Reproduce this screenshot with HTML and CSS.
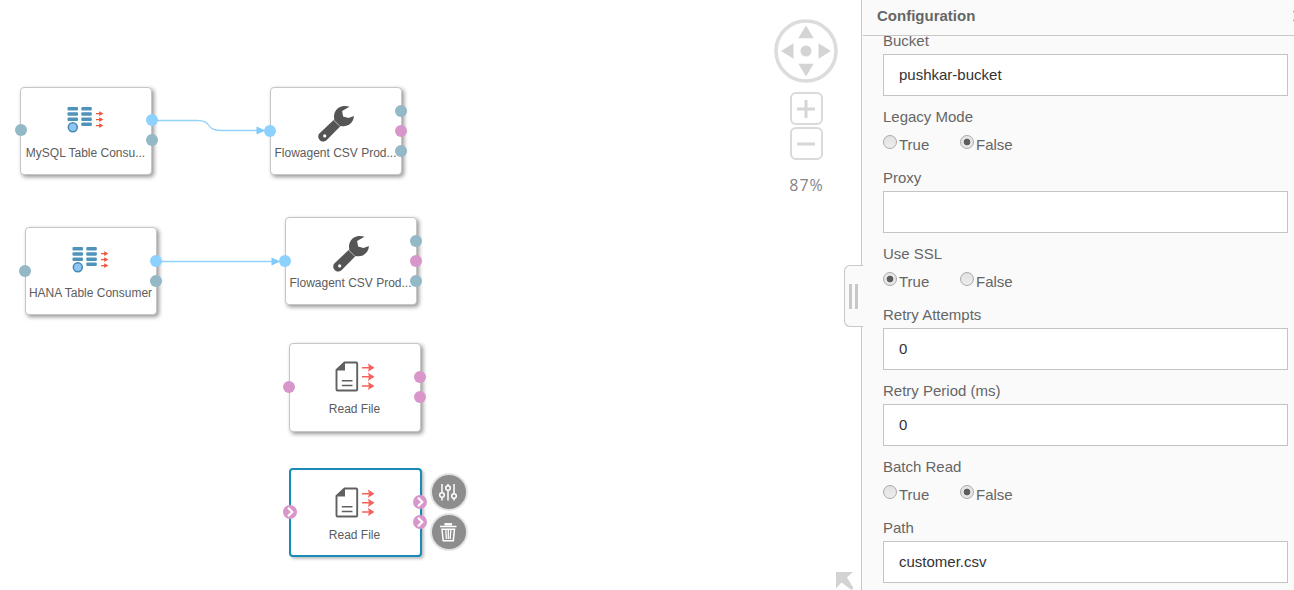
FILE: index.html
```html
<!DOCTYPE html>
<html lang="en">
<head>
<meta charset="utf-8">
<title>Pipeline</title>
<link rel="stylesheet" href="styles.css">
</head>
<body>
<svg class="defs" width="0" height="0">
  <defs>
    <symbol id="table" viewBox="0 0 44 40">
      <g fill="#4f93ba"><rect x="3.5" y="5" width="10.5" height="3.500" rx="1"/><rect x="3.5" y="10.200" width="10.500" height="3.500" rx="1"/><rect x="3.500" y="15.400" width="10.500" height="3.500" rx="1"/><rect x="17.300" y="5" width="10.500" height="3.500" rx="1"/><rect x="17.300" y="10.200" width="10.500" height="3.500" rx="1"/><rect x="17.300" y="15.400" width="10.500" height="3.500" rx="1"/><rect x="17.300" y="20.500" width="10.500" height="3.500" rx="1"/></g>
      <circle cx="8.800" cy="25.200" r="4.500" fill="#8fc5f3" stroke="#4689b4" stroke-width="1.500"/>
      <path d="M32 11.600h5M32 17.600h5M32 23.600h5" stroke="#f0563d" stroke-width="1.200"/>
      <path fill="#f0563d" d="M35.200 9.200l4.200 2.400-4.200 2.400zM35.200 15.200l4.200 2.400-4.200 2.400zM35.200 21.200l4.200 2.400-4.200 2.400z"/>
    </symbol>
    <symbol id="wrench" viewBox="0 0 44 40">
      <path fill="#555" d="M35.500 4.800C29.500 2.600 22.600 5 20.600 11c-.8 2.300-.8 4.200-.2 6.200L5.600 31.300c-4.200 4.300 2.300 11.200 6.900 7L26.600 23.900c5.200 1.100 9.900-.6 12.200-5.300 .7-1.400 1-2.900 1.100-4.600l-5.300 2.100-5.500-1.700-1-5.300z"/>
      <path d="M19.400 17.800l6.300 6.300" stroke="#fff" stroke-width=".6"/>
      <circle cx="10.700" cy="33.900" r="1.600" fill="#fff"/>
    </symbol>
    <symbol id="file" viewBox="0 0 44 40">
      <path d="M3.500 12L11.500 4.500H23.200a1 1 0 0 1 1 1V31.500a1 1 0 0 1-1 1H4.500a1 1 0 0 1-1-1z" fill="#fff" stroke="#606060" stroke-width="1.900"/>
      <path d="M3 12.500L12 4v8.500z" fill="#606060"/>
      <path d="M8.800 22.800h10.700M8.800 27.500h10.700" stroke="#606060" stroke-width="1.600"/>
      <path d="M29 9.700h9M29 18.800h9M29 28h9" stroke="#f75f5c" stroke-width="1.500"/>
      <path fill="#f75f5c" d="M35 5.600l6.500 4.100-6.500 4.100 1-4.100zM35 14.700l6.500 4.100-6.500 4.100 1-4.100zM35 23.900l6.500 4.100-6.500 4.100 1-4.100z"/>
    </symbol>
    <symbol id="chevron" viewBox="0 0 14 14">
      <path d="M5 2.700l4.300 4.300L5 11.300" fill="none" stroke="#fff" stroke-width="2.100"/>
    </symbol>
  </defs>
</svg>
<div class="app">
  <main class="canvas">
    <svg class="links" width="861" height="590">
      <path d="M152 120.500H197C214 120.500 204 130.500 221 130.500H258M156 261.500H273" fill="none" stroke="#93d3f8" stroke-width="1.300"/>
      <path d="M256.500 126.500l9 4-9 4zM271.500 257.500l9 4-9 4z" fill="#80cbf7"/>
    </svg>

    <div class="node n1">
      <svg class="icon"><use href="#table"/></svg><span class="label">MySQL Table Consu...</span>
      <i class="port in"></i><i class="port out upper sky"></i><i class="port out lower"></i>
    </div>
    <div class="node n2">
      <svg class="icon"><use href="#wrench"/></svg><span class="label">Flowagent CSV Prod...</span>
      <i class="port in sky"></i><i class="port out first"></i><i class="port out mid pink"></i><i class="port out last"></i>
    </div>
    <div class="node n3">
      <svg class="icon"><use href="#table"/></svg><span class="label">HANA Table Consumer</span>
      <i class="port in"></i><i class="port out upper sky"></i><i class="port out lower"></i>
    </div>
    <div class="node n4">
      <svg class="icon"><use href="#wrench"/></svg><span class="label">Flowagent CSV Prod...</span>
      <i class="port in sky"></i><i class="port out first"></i><i class="port out mid pink"></i><i class="port out last"></i>
    </div>
    <div class="node n5">
      <svg class="icon"><use href="#file"/></svg><span class="label">Read File</span>
      <i class="port in pink"></i><i class="port out upper pink"></i><i class="port out lower pink"></i>
    </div>
    <div class="node n6 selected">
      <svg class="icon"><use href="#file"/></svg><span class="label">Read File</span>
      <i class="port in pink"><svg width="14" height="14"><use href="#chevron"/></svg></i>
      <i class="port out upper pink"><svg width="14" height="14"><use href="#chevron"/></svg></i>
      <i class="port out lower pink"><svg width="14" height="14"><use href="#chevron"/></svg></i>
    </div>

    <div class="actions">
      <button class="action" aria-label="Configure"><svg width="34" height="34" viewBox="0 0 34 34" fill="none" stroke="#fff" stroke-width="1.500"><path d="M10 9v8.500M10 22.500v3M16 9v1.500M16 15.500v10M22 9v9.500M22 23.500v2"/><circle cx="10" cy="20" r="2.300"/><circle cx="16" cy="13" r="2.300"/><circle cx="22" cy="21" r="2.300"/></svg></button>
      <button class="action" aria-label="Delete"><svg width="34" height="34" viewBox="0 0 34 34" fill="none" stroke="#fff" stroke-width="1.500"><path d="M8 11.500h16.500M10 14.200h12.500L21.300 25.700H11.200z"/><path d="M12.500 9.300h7.500" stroke-width="2.500"/><path d="M13.800 15l.6 9M16.300 15v9M18.800 15l-.6 9" stroke-width="1.300"/></svg></button>
    </div>

    <div class="nav">
      <svg width="64" height="64" viewBox="0 0 64 64">
        <circle cx="32" cy="32" r="30" fill="#fff" stroke="#dcdcdc" stroke-width="3.600"/>
        <circle cx="32" cy="32" r="5.500" fill="#d4d4d4"/>
        <path fill="#d4d4d4" d="M32 6.500l7.700 12.800H24.300zM32 57.500l7.700-12.800H24.300zM7 32l12.500-7.700v15.400zM57 32l-12.500-7.700v15.400z"/>
      </svg>
      <button class="zoom" aria-label="Zoom in"><svg width="18" height="18" stroke="#d6d6d6" stroke-width="3"><path d="M0 9h18M9 0v18"/></svg></button>
      <button class="zoom" aria-label="Zoom out"><svg width="18" height="18" stroke="#d6d6d6" stroke-width="3"><path d="M0 9h18"/></svg></button>
      <span class="percent">87%</span>
    </div>
    <svg class="corner" width="18" height="18"><path fill="#d3d3d3" d="M0 0h17l-6 5.500 6.500 10.500-2 2L5.500 10.500 0 16.500z"/></svg>
    <div class="grip"><i></i><i></i></div>
  </main>

  <aside class="panel">
    <header class="head"><h1>Configuration</h1><svg class="close" width="12" height="12" stroke="#d2a77d" stroke-width="1.500"><path d="M0 1l10 10M0 11L10 1"/></svg></header>
    <form class="fields">
      <div class="field"><label>Bucket</label><input type="text" value="pushkar-bucket"></div>
      <div class="field"><label>Legacy Mode</label><div class="options"><span><i class="radio"></i><b>True</b></span><span><i class="radio on"></i><b>False</b></span></div></div>
      <div class="field"><label>Proxy</label><input type="text" value=""></div>
      <div class="field"><label>Use SSL</label><div class="options"><span><i class="radio on"></i><b>True</b></span><span><i class="radio"></i><b>False</b></span></div></div>
      <div class="field"><label>Retry Attempts</label><input type="text" value="0"></div>
      <div class="field"><label>Retry Period (ms)</label><input type="text" value="0"></div>
      <div class="field"><label>Batch Read</label><div class="options"><span><i class="radio"></i><b>True</b></span><span><i class="radio on"></i><b>False</b></span></div></div>
      <div class="field"><label>Path</label><input type="text" value="customer.csv"></div>
    </form>
  </aside>
</div>
</body>
</html>
```

FILE: styles.css
```css
* { box-sizing: border-box; }
body { margin: 0; background: #fff; font-family: "Liberation Sans", Arial, sans-serif; color: #666; overflow: hidden; }
button { padding: 0; background: none; border: 0; }
.defs { position: absolute; }
.app { display: flex; height: 590px; overflow: hidden; }

.canvas { position: relative; width: 861px; flex: none; }
.links { position: absolute; left: 0; top: 0; }
.node {
  position: absolute; width: 132px; height: 88px; padding-top: 14px;
  display: flex; flex-direction: column; align-items: center; gap: 3px;
  background: #fff; border: 1px solid #c6c6c6; border-radius: 4px;
  box-shadow: 2px 2px 4px rgba(0, 0, 0, .42);
}
.n1 { left: 20px; top: 87px; }
.n2 { left: 270px; top: 87px; }
.n3 { left: 25px; top: 227px; }
.n4 { left: 285px; top: 217px; }
.n5 { left: 289px; top: 343px; height: 89px; }
.icon { width: 44px; height: 40px; flex: none; margin-left: -1px; }
.label { font-size: 12px; line-height: 16px; color: #5c5c5c; white-space: nowrap; margin-left: -1px; }

.port { position: absolute; width: 12px; height: 12px; border-radius: 50%; background: #93b8c6; }
.in { left: -7px; top: 37px; }
.out { right: -6px; }
.n1 .port { margin-top: -1px; }
.n1 .out { right: -7px; }
.n1 .in { left: -6px; }
.n2 .port { margin-top: -.5px; }
.upper { top: 27px; }
.lower { top: 47px; }
.first { top: 17px; }
.mid { top: 37px; }
.last { top: 57px; }
.sky { background: #8cd1ff; }
.pink { background: #d896cb; }

.selected { left: 288.500px; top: 468px; width: 133px; height: 89px; border: 2px solid #188ab5; box-shadow: 2px 2px 3px rgba(0, 0, 0, .25); }
.selected .port { width: 14px; height: 14px; margin: -2px -1px; }
.selected .port svg { display: block; }

.actions { position: absolute; left: 429.500px; top: 472.500px; display: flex; flex-direction: column; gap: 2px; }
.action { width: 38px; height: 38px; border-radius: 50%; background: #8d8d8d; border: 2px solid #e4e4e4; }
.action svg { display: block; }

.nav { position: absolute; left: 774px; top: 19px; width: 64px; display: flex; flex-direction: column; align-items: center; }
.zoom { width: 33px; height: 33px; display: grid; place-items: center; border: 2px solid #dadada; border-radius: 6px; }
.zoom:nth-of-type(1) { margin-top: 9px; }
.zoom + .zoom { margin-top: 2px; }
.percent { margin-top: 14px; font: 16px/22px "Open Sans", sans-serif; letter-spacing: 1px; padding-left: 1px; color: #858585; }
.corner { position: absolute; left: 836px; top: 572px; }
.grip {
  position: absolute; left: 844px; top: 265px; width: 19px; height: 62px; z-index: 1;
  display: flex; justify-content: center; align-items: center; gap: 3px; padding-right: 1px;
  background: #fafafa; border: 1px solid #c8c8c8; border-right: 0; border-radius: 6px 0 0 6px;
}
.grip i { width: 3px; height: 25px; background: #c8c8c8; }

.panel { width: 433px; height: 590px; background: #fafafa; border-left: 1px solid #c8c8c8; overflow: hidden; }
.head { position: relative; z-index: 1; display: flex; justify-content: space-between; height: 36px; padding: 7px 0 0 14px; margin-left: 1px; background: #fafafa; border-bottom: 1px solid #c8c8c8; }
.head h1 { margin: 0; font-size: 15px; line-height: 17px; }
.close { flex: none; margin: 3px -11px 0 0; }
.fields { display: flex; flex-direction: column; gap: 12px; width: 405px; margin: -4px 0 0 21px; }
.field { display: flex; flex-direction: column; font-size: 15px; }
.field label { line-height: 18px; }
.field input { margin: 4px 0 0; height: 42px; width: 405px; padding: 0 15px 2px; border: 1px solid #c4c4c4; background: #fff; font: inherit; color: #333; }
.options { display: flex; height: 31px; padding-top: 9px; }
.options span { display: flex; width: 77px; gap: 2px; }
.options b { font-weight: normal; line-height: 20px; }
.radio { width: 14px; height: 14px; border: 1px solid #aaa; border-radius: 50%; background: linear-gradient(#e2e2e2, #ededed); }
.radio.on { background: radial-gradient(circle, #5e5e5e 0 3px, #e6e6e6 3.700px); }
```
